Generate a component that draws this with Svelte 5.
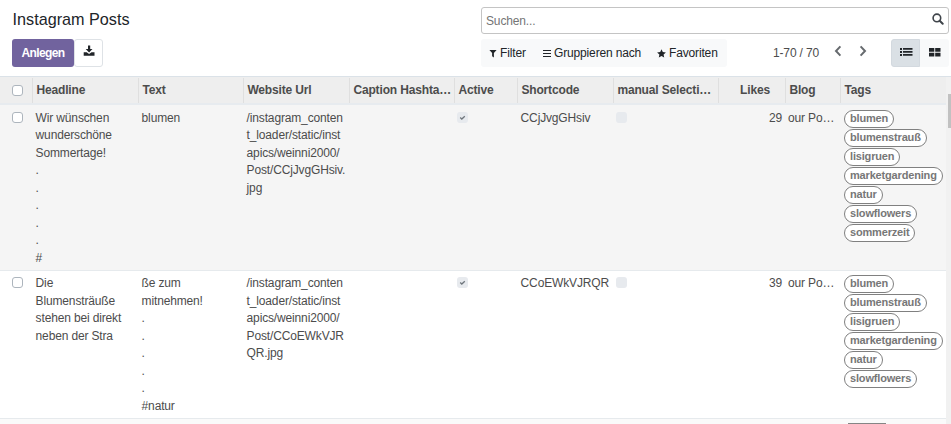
<script>
  const tags = ['blumen', 'blumenstrauß', 'lisigruen', 'marketgardening', 'natur', 'slowflowers', 'sommerzeit'];
  const headers = ['Headline', 'Text', 'Website Url', 'Caption Hashta…', 'Active', 'Shortcode', 'manual Selecti…', 'Likes', 'Blog', 'Tags'];
  const rows = [
    {
      headline: ['Wir wünschen', 'wunderschöne', 'Sommertage!', '.', '.', '.', '.', '.', '#'],
      text: ['blumen'],
      url: ['/instagram_conten', 't_loader/static/inst', 'apics/weinni2000/', 'Post/CCjJvgGHsiv.', 'jpg'],
      code: 'CCjJvgGHsiv', likes: 29, blog: 'our Po…', tags
    },
    {
      headline: ['Die', 'Blumensträuße', 'stehen bei direkt', 'neben der Stra'],
      text: ['ße zum', 'mitnehmen!', '.', '.', '.', '.', '.', '#natur'],
      url: ['/instagram_conten', 't_loader/static/inst', 'apics/weinni2000/', 'Post/CCoEWkVJR', 'QR.jpg'],
      code: 'CCoEWkVJRQR', likes: 39, blog: 'our Po…', tags: tags.slice(0, 6)
    }
  ];
</script>

{#snippet lines(list)}
  {#each list as line}<div class="line">{line}</div>{/each}
{/snippet}

<div class="app">
  <header class="panel">
    <div class="left">
      <h1>Instagram Posts</h1>
      <div class="buttons">
        <button class="create">Anlegen</button>
        <button class="export" aria-label="Export">
          <svg width="12" height="12" viewBox="0 0 12 12"><path d="M5 0.5h2.2v3.6h2.3L6.1 7.4 2.7 4.1H5z" /><path d="M0.7 7.2h3l2.4 1.7 2.4-1.7h3v3.6H0.7z" /></svg>
        </button>
      </div>
    </div>
    <div class="right">
      <div class="search">
        <span>Suchen...</span>
        <svg width="12" height="12" viewBox="0 0 12 12" fill="none" stroke="#3f444a"><circle cx="4.9" cy="4.9" r="3.8" stroke-width="1.6" /><path d="M7.7 7.7 10.7 10.7" stroke-width="2" stroke-linecap="round" /></svg>
      </div>
      <div class="tools">
        <div class="filters">
          <span class="f1"><svg width="8" height="9" viewBox="0 0 8 9"><path d="M.4 1h7.2L4.9 4.1V8.6L3.1 7.2V4.1z" /></svg>Filter</span>
          <span class="f2"><svg width="8" height="9" viewBox="0 0 8 9"><path d="M0 1h8v1H0zM0 4h8v1H0zM0 7h8v1H0z" /></svg>Gruppieren nach</span>
          <span class="f3"><svg width="9" height="9" viewBox="0 0 9 9"><path d="M4.5.2 5.8 3 8.9 3.4 6.6 5.5 7.2 8.6 4.5 7.1 1.8 8.6 2.4 5.5.1 3.4 3.2 3z" /></svg>Favoriten</span>
        </div>
        <div class="pager">
          <span>1-70 / 70</span>
          <svg width="8" height="12" viewBox="0 0 8 12"><path d="M6.4 1.4 2 6l4.4 4.6" /></svg>
          <svg width="8" height="12" viewBox="0 0 8 12"><path d="M1.6 1.4 6 6l-4.4 4.6" /></svg>
        </div>
        <div class="views">
          <button class="on" aria-label="List"><svg width="13" height="11" viewBox="0 0 13 11"><path d="M0 1h2v2H0zM3 1h9.5v1.7H3zM0 4h2v2H0zM3 4h9.5v1.7H3zM0 7h2v2H0zM3 7h9.5v1.7H3z" /></svg></button>
          <button aria-label="Kanban"><svg width="12" height="11" viewBox="0 0 12 11"><path d="M0 1h5.3v3.7H0zM6.2 1h5.3v3.7H6.2zM0 5.7h5.3v3.8H0zM6.2 5.7h5.3v3.8H6.2z" /></svg></button>
        </div>
      </div>
    </div>
  </header>

  <div class="content">
    <div class="list">
      <div class="grid head">
        <div class="sel"><i class="box"></i></div>
        {#each headers as h}<div class="th" class:num={h === 'Likes'}>{h}</div>{/each}
      </div>
      {#each rows as r, i}
        <div class="grid row" class:hover={i === 0}>
          <div class="sel"><i class="box"></i></div>
          <div>{@render lines(r.headline)}</div>
          <div>{@render lines(r.text)}</div>
          <div>{@render lines(r.url)}</div>
          <div></div>
          <div class="check"><i class="box off"><svg width="11" height="11" viewBox="0 0 11 11"><path d="M3.2 5.5 4.8 7 7.8 4.2" fill="none" stroke="#70777d" stroke-width="1.3" /></svg></i></div>
          <div>{r.code}</div>
          <div class="check"><i class="box off"></i></div>
          <div class="num">{r.likes}</div>
          <div class="blog">{r.blog}</div>
          <div class="tags">{#each r.tags as t}<span class="tag">{t}</span>{/each}</div>
        </div>
      {/each}
      <div class="row next"><div class="tag-top"></div></div>
    </div>
    <div class="scroll"><div class="thumb"></div></div>
  </div>
  <svg class="cursor" width="20" height="26" viewBox="0 0 20 26"><path d="M5.3 14V3Q5.3 1.2 7 1.2T8.7 3V10Q8.7 7.3 10.2 7.3T11.8 9V11Q11.8 8.2 13.2 8.2T14.8 10V12Q14.8 9.5 16.1 9.5T17.5 11.5V17Q17.5 20 15.5 21.5V22Q14 23.8 11 23.8T6.5 22V21L1.6 16Q.5 14.7 1.7 13.7T4 14L5.3 15.4Z" fill="#fff" stroke="#15151f" stroke-width="1.3" stroke-linejoin="round" /><path d="M8.7 9v4M11.8 10v3.5M14.8 11v3" stroke="#15151f" stroke-width="1.2" /></svg>
</div>

<style>
  :global(body) { background: #fff; overflow: hidden; }
  .app { position: relative; width: 951px; height: 424px; overflow: hidden; display: flex; flex-direction: column; font: 12px/17.55px "Liberation Sans", Arial, sans-serif; letter-spacing: -0.15px; color: #4c4c4c; box-sizing: border-box; }
  .app *, .app { box-sizing: border-box; }
  svg { display: block; flex: none; }
  button { font: inherit; letter-spacing: inherit; margin: 0; padding: 0; display: flex; align-items: center; justify-content: center; border: 0; }
  .panel { height: 76px; flex: none; display: flex; justify-content: space-between; padding: 7px 2px 0 12px; }
  h1 { margin: 0; padding-left: 0.6px; height: 32px; font-size: 16.2px; letter-spacing: 0; font-weight: 400; line-height: 25px; color: #212529; }
  .buttons { display: flex; }
  .create { width: 62px; height: 28px; padding-top: 1px; background: #71639e; color: #fff; font-weight: 700; letter-spacing: -0.62px; border-radius: 3px; }
  .export { width: 29px; height: 28px; background: #fff; border: 1px solid #dee2e6; border-radius: 3px; fill: #212529; padding-bottom: 4px; }
  .right { width: 468px; }
  .search { height: 27px; border: 1px solid #c4c4c4; border-radius: 3px; display: flex; align-items: center; justify-content: space-between; padding: 3px 4px 0 4px; color: #757575; }
  .search svg { margin-top: -6px; }
  .tools { display: flex; margin-top: 5px; height: 28px; align-items: center; }
  .filters { display: flex; align-items: center; width: 246px; height: 28px; background: #f8f9fa; border-radius: 3px; color: #212529; fill: #212529; padding: 1px 0 0 8px; }
  .filters span { display: flex; align-items: center; gap: 3px; white-space: nowrap; }
  .filters svg { margin-top: 1px; }
  .f1 { width: 54px; }
  .f2 { width: 114px; }
  .pager { display: flex; align-items: center; width: 164px; padding: 1px 0 0 46px; }
  .pager span { width: 61px; white-space: nowrap; }
  .pager svg { fill: none; stroke: #666a6e; stroke-width: 2; margin-top: -4px; }
  .pager svg + svg { margin-left: 17px; }
  .views { display: flex; }
  .views button { width: 29px; height: 28px; background: #f8f9fa; fill: #212529; padding: 0 0 2px 1px; border-radius: 0 3px 3px 0; }
  .views .on { background: #dae0e5; border: 1px solid #d3d9df; border-radius: 3px 0 0 3px; }
  .content { display: flex; height: 348px; border-top: 1px solid #dbe2e8; }
  .list { width: 946px; flex: none; }
  .scroll { width: 5px; background: #f1f1f1; padding-top: 17px; }
  .thumb { height: 34px; background: #c1c1c1; margin-left: 2px; }
  .grid { display: grid; grid-template-columns: 32px 106px 105px 106px 105px 63px 96px 105px 67px 55px 106px; }
  .head { height: 28px; background: #eee; border-bottom: 2px solid #e7ebef; font-weight: 700; line-height: 26px; }
  .th { border-left: 1px solid #dfdfdf; padding-left: 3.4px; white-space: nowrap; overflow: hidden; height: 25px; margin-top: 1px; line-height: 24px; }
  .th.num { padding-right: 15px; text-align: right; }
  .row { height: 166px; border-bottom: 1px solid #e6eaed; background: #fff; line-height: 17.55px; }
  .row > div { padding: 4.6px 0 0 3.6px; white-space: nowrap; }
  .row.hover { background: #f5f5f5; }
  .row + .row { height: 148px; }
  .row + .row > div { padding-top: 4px; }
  .row + .row.next { height: 6px; overflow: hidden; background: #fafafa; border: 0; padding: 4px 0 0 848px; }
  .row + .row.next > .tag-top { width: 38px; height: 2px; padding: 0; background: #858585; }
  .line { height: 17.55px; }
  .row .sel, .head .sel, .row + .row .sel { padding: 7px 0 0 12px; }
  .head .sel { padding-top: 8px; }
  .box { display: block; width: 11px; height: 11px; border: 1px solid #adb5bd; border-radius: 3px; background: #fff; }
  .row .check, .row + .row .check { padding: 7px 0 0 3px; }
  .row + .row .check, .row + .row .sel { padding-top: 6px; }
  .box.off { border: 0; background: #e7eaee; }
  .row .num { padding-right: 3px; text-align: right; }
  .row > .blog { padding-left: 3px; }
  .row > .tags, .row + .row > .tags { display: flex; flex-direction: column; align-items: flex-start; gap: 1px; padding: 5px 0 0 4px; }
  .row + .row > .tags { padding-top: 4px; }
  .tag { height: 18px; flex: none; border: 1px solid #808080; border-radius: 9px; background: #fff; color: #777; font-size: 11px; letter-spacing: -0.17px; font-weight: 700; line-height: 15px; padding: 0 5px; }
</style>
